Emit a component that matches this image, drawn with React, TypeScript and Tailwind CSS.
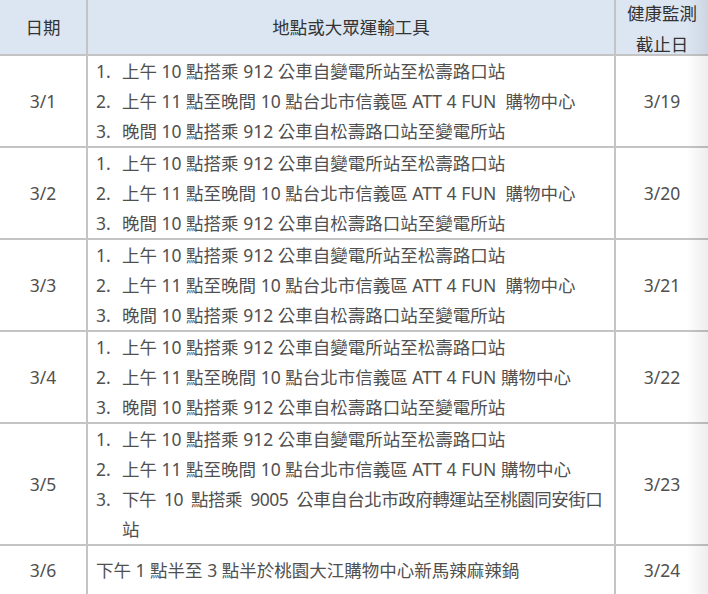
import React from "react";

type Row = {
  date: string;
  until: string;
  items: string[][];
  plain?: string;
};

const line1 = "上午 10 點搭乘 912 公車自變電所站至松壽路口站";
const line3 = "晚間 10 點搭乘 912 公車自松壽路口站至變電所站";

const rows: Row[] = [
  { date: "3/1", until: "3/19", items: [[line1], ["上午 11 點至晚間 10 點台北市信義區 ATT 4 FUN  購物中心"], [line3]] },
  { date: "3/2", until: "3/20", items: [[line1], ["上午 11 點至晚間 10 點台北市信義區 ATT 4 FUN  購物中心"], [line3]] },
  { date: "3/3", until: "3/21", items: [[line1], ["上午 11 點至晚間 10 點台北市信義區 ATT 4 FUN  購物中心"], [line3]] },
  { date: "3/4", until: "3/22", items: [[line1], ["上午 11 點至晚間 10 點台北市信義區 ATT 4 FUN 購物中心"], [line3]] },
  {
    date: "3/5",
    until: "3/23",
    items: [
      [line1],
      ["上午 11 點至晚間 10 點台北市信義區 ATT 4 FUN 購物中心"],
      ["下午 10 點搭乘 9005 公車自台北市政府轉運站至桃園同安街口", "站"],
    ],
  },
  { date: "3/6", until: "3/24", items: [], plain: "下午 1 點半至 3 點半於桃園大江購物中心新馬辣麻辣鍋" },
];

export default function App() {
  return (
    <div
      className="relative w-[708px] h-[594px] overflow-hidden bg-white text-[17.5px] text-[#505050]"
      style={{ fontFamily: '"Noto Sans", "Noto Sans CJK TC", sans-serif' }}
    >
      {/* Header */}
      <div className="flex h-[56px] border-b-2 border-[#c4c4c4] bg-[#dce6f2] text-[#333]">
        <div className="flex w-[88px] items-center justify-center border-r-2 border-[#c4c4c4]">
          日期
        </div>
        <div className="flex w-[528px] items-center justify-center border-r-2 border-[#c4c4c4]">
          地點或大眾運輸工具
        </div>
        <div className="flex flex-1 flex-col items-center justify-center pt-[3px] leading-[31px]">
          <span>健康監測</span>
          <span>截止日</span>
        </div>
      </div>

      {/* Body */}
      {rows.map((row) => (
        <div key={row.date} className="flex border-b-2 border-[#c4c4c4] leading-[30px]">
          <div className="flex w-[88px] items-center justify-center border-r-2 border-[#c4c4c4]">
            {row.date}
          </div>
          <div
            className={
              row.plain
                ? "w-[528px] border-r-2 border-[#c4c4c4] py-[9px] pl-[8px]"
                : "w-[528px] border-r-2 border-[#c4c4c4] pl-[8px]"
            }
          >
            {row.plain ? (
              <div className="whitespace-pre">{row.plain}</div>
            ) : (
              row.items.map((lines, i) => (
                <div key={i} className="flex">
                  <span className="w-[26px] shrink-0">{i + 1}.</span>
                  <div className="flex flex-col">
                    {lines.map((t, j) => (
                      <span
                        key={j}
                        className={
                          lines.length > 1 && j === 0
                            ? "whitespace-pre tracking-[-0.5px] [word-spacing:4px]"
                            : "whitespace-pre"
                        }
                      >
                        {t}
                      </span>
                    ))}
                  </div>
                </div>
              ))
            )}
          </div>
          <div className="flex flex-1 items-center justify-center">{row.until}</div>
        </div>
      ))}

      {/* right edge shade */}
      <div className="pointer-events-none absolute top-0 right-0 h-full w-[22px] bg-gradient-to-r from-transparent to-black/[0.07]" />
    </div>
  );
}
